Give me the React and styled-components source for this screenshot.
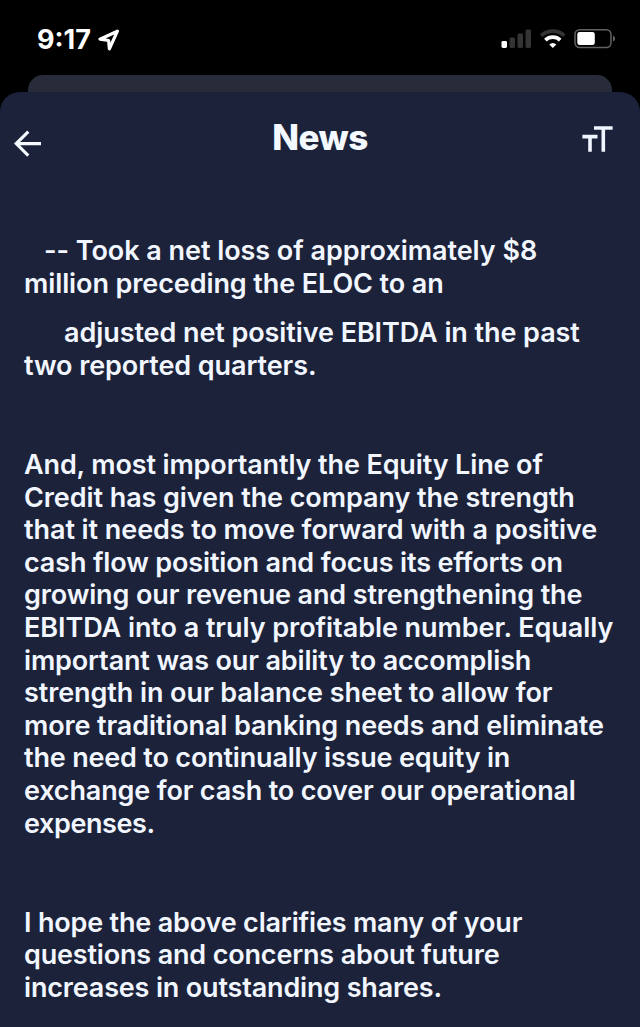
import React from "react";
import styled, { createGlobalStyle } from "styled-components";

// each line is [text, letter spacing in px]
const paragraphs = [
  {
    indent: 20,
    lines: [
      ["-- Took a net loss of approximately $8", -0.05],
      ["million preceding the ELOC to an", -0.1],
    ],
  },
  {
    indent: 40,
    lines: [
      ["adjusted net positive EBITDA in the past", -0.08],
      ["two reported quarters.", -0.09],
    ],
  },
  { lines: [["", 0]] },
  {
    lines: [
      ["And, most importantly the Equity Line of", -0.13],
      ["Credit has given the company the strength", -0.08],
      ["that it needs to move forward with a positive", -0.07],
      ["cash flow position and focus its efforts on", -0.14],
      ["growing our revenue and strengthening the", -0.13],
      ["EBITDA into a truly profitable number. Equally", -0.06],
      ["important was our ability to accomplish", -0.15],
      ["strength in our balance sheet to allow for", -0.09],
      ["more traditional banking needs and eliminate", -0.12],
      ["the need to continually issue equity in", -0.18],
      ["exchange for cash to cover our operational", -0.16],
      ["expenses.", -0.4],
    ],
  },
  { lines: [["", 0]] },
  {
    lines: [
      ["I hope the above clarifies many of your", -0.18],
      ["questions and concerns about future", -0.17],
      ["increases in outstanding shares.", -0.17],
    ],
  },
];

const StatusIcons = () => (
  <svg width="118" height="24" viewBox="0 0 118 24">
    <rect x="3.5" y="14" width="5.5" height="7" rx="1.4" fill="#fff" />
    <rect x="11.5" y="10.5" width="5.5" height="10.5" rx="1.4" fill="#343434" />
    <rect x="19.5" y="6.5" width="5.5" height="14.5" rx="1.4" fill="#343434" />
    <rect x="27.5" y="2.5" width="5.5" height="18.5" rx="1.4" fill="#343434" />
    <g fill="none" strokeWidth="3.8">
      <path d="M43.2 8.7a17 17 0 0 1 23.2 0" stroke="#343434" />
      <path d="M47.4 13.1a10.8 10.8 0 0 1 14.8 0" stroke="#fff" />
    </g>
    <path d="M54.8 21.1l-3.5-3.5a5.2 5.2 0 0 1 7 0z" fill="#fff" />
    <rect
      x="77"
      y="2.7"
      width="36"
      height="17.8"
      rx="4.7"
      fill="none"
      stroke="#626262"
      strokeWidth="1.5"
    />
    <rect x="79.3" y="5.1" width="17.5" height="13" rx="2.4" fill="#fff" />
    <path d="M115 8.8c2.8 1.1 2.8 4.6 0 5.7z" fill="#626262" />
  </svg>
);

const App = () => {
  return (
    <>
      <GlobalStyle />
      <Screen>
        <StatusBar>
          <Clock>
            9:17
            <svg width="22" height="22" viewBox="0 0 22 22">
              <path
                d="M19.4 2.2L2 10.2l8.6 1.3.8 8.3z"
                fill="none"
                stroke="#fff"
                strokeWidth="3.2"
                strokeLinejoin="round"
              />
            </svg>
          </Clock>
          <StatusIcons />
        </StatusBar>
        <BackSheet />
        <Sheet>
          <Header>
            <IconButton aria-label="Back">
              <svg width="28" height="28" viewBox="0 0 28 28">
                <path
                  d="M27 14.6H2.5M14.3 2.6L2.2 14.6l12.1 12"
                  fill="none"
                  stroke="#f6faff"
                  strokeWidth="3.1"
                />
              </svg>
            </IconButton>
            <Title>News</Title>
            <IconButton aria-label="Text size" $right>
              <svg width="32" height="28" viewBox="0 0 32 28">
                <path
                  d="M13 3H31.6M22.3 3V26.8M1.4 11.6H16.5M9 11.6V26.8"
                  fill="none"
                  stroke="#f0f5ff"
                  strokeWidth="3.6"
                />
              </svg>
            </IconButton>
          </Header>
          <Article>
            {paragraphs.map((p, idx) => (
              <Paragraph key={idx} $indent={p.indent}>
                {p.lines.map(([text, tracking], i) => (
                  <Line key={i} $tracking={tracking}>
                    {text}
                  </Line>
                ))}
              </Paragraph>
            ))}
          </Article>
        </Sheet>
      </Screen>
    </>
  );
};

const GlobalStyle = createGlobalStyle`
  body {
    margin: 0;
    background: #000;
  }
`;

const Screen = styled.div`
  display: flex;
  flex-direction: column;
  width: 640px;
  height: 1027px;
  overflow: hidden;
  background: #000;
  font-family: Inter, "Liberation Sans", sans-serif;
`;

const StatusBar = styled.div`
  display: flex;
  flex: none;
  justify-content: space-between;
  align-items: center;
  height: 75px;
  padding: 3px 24px 0 37px;
  box-sizing: border-box;
`;

const Clock = styled.div`
  display: flex;
  align-items: center;
  gap: 7px;
  padding-top: 1px;
  color: #fff;
  font-size: 27px;
  font-weight: 700;
  line-height: 32px;
`;

const BackSheet = styled.div`
  flex: none;
  height: 17px;
  margin: 0 28px;
  border-radius: 15px 15px 0 0;
  background: #282b3a;
`;

const Sheet = styled.main`
  flex: 1;
  border-radius: 20px 20px 0 0;
  background: #1c2239;
`;

const Header = styled.header`
  display: grid;
  grid-template-columns: 60px 1fr 60px;
  align-items: center;
  height: 92px;
`;

const Title = styled.h1`
  margin: 0 0 2px;
  color: #f4f8ff;
  font-size: 35px;
  font-weight: 800;
  letter-spacing: -0.5px;
  line-height: 44px;
  text-align: center;
`;

const IconButton = styled.button`
  display: flex;
  justify-content: ${(props) => (props.$right ? "flex-end" : "flex-start")};
  padding: ${(props) => (props.$right ? "2px 27px 0 0" : "10px 0 0 14px")};
  border: 0;
  background: transparent;
`;

const Article = styled.article`
  padding: 51px 0 0 24px;
  color: #f1f6ff;
  font-size: 27px;
  font-weight: 560;
  line-height: 32.6px;
`;

const Paragraph = styled.p`
  margin: 0 0 17px;
  text-indent: ${(props) => props.$indent || 0}px;
`;

const Line = styled.span`
  display: block;
  min-height: 32.6px;
  letter-spacing: ${(props) => props.$tracking}px;
  white-space: nowrap;

  & + & {
    text-indent: 0;
  }
`;

export default App;
